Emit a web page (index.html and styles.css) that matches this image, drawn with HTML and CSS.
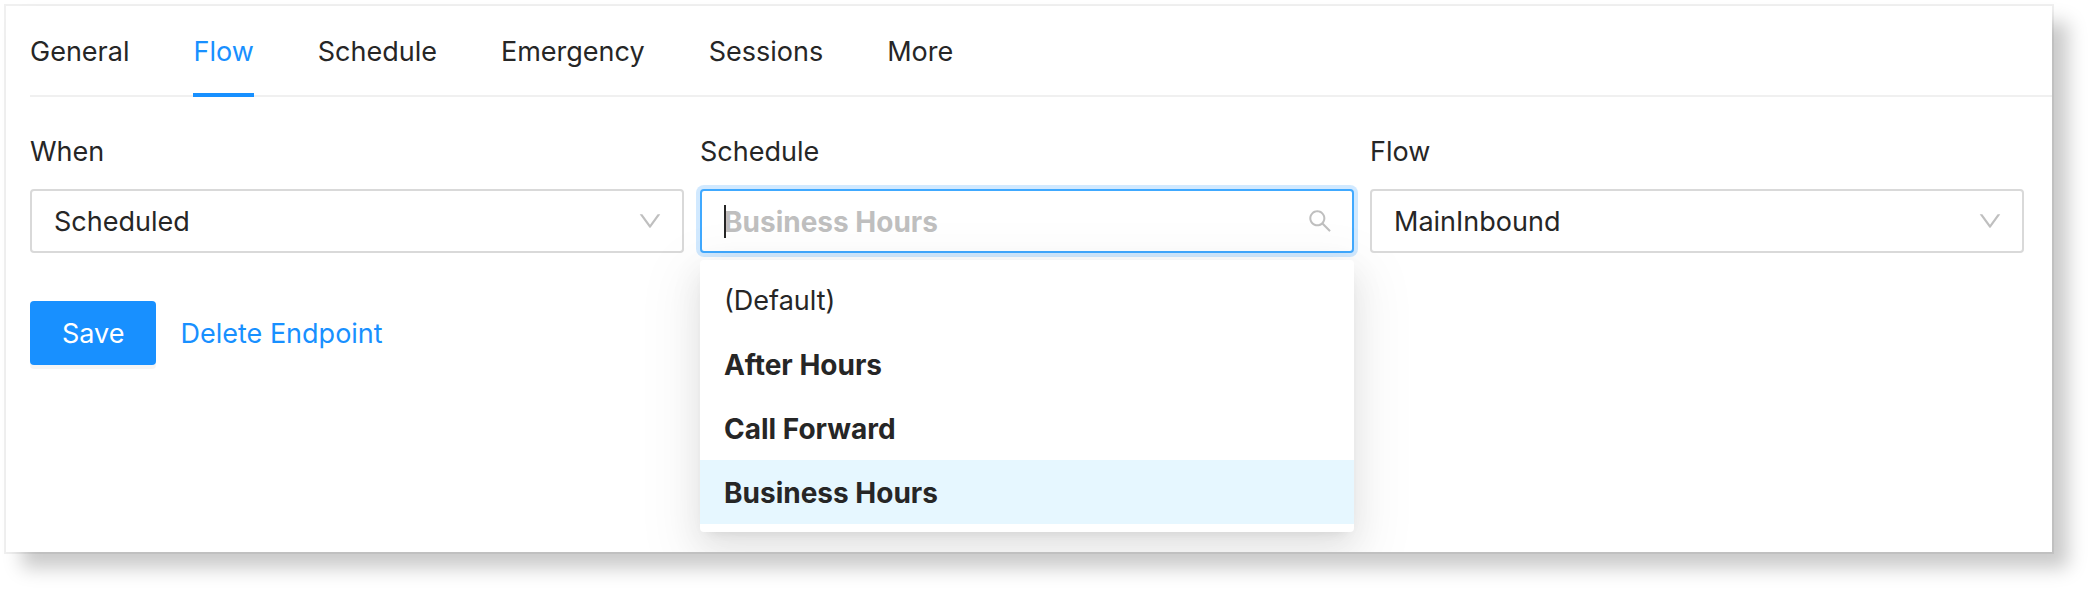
FILE: index.html
```html
<!DOCTYPE html>
<html lang="en">
<head>
  <meta charset="UTF-8" />
  <meta name="viewport" content="width=device-width, initial-scale=1.0" />
  <title>Endpoint - Flow</title>
  <link rel="stylesheet" href="styles.css">
</head>
<body>
  <main class="card">
    <!-- Tabs -->
    <nav class="tabs">
      <a href="#general">General</a>
      <a href="#flow" class="active">Flow</a>
      <a href="#schedule">Schedule</a>
      <a href="#emergency">Emergency</a>
      <a href="#sessions">Sessions</a>
      <a href="#more">More</a>
    </nav>

    <form class="form">
      <div class="fields">
        <div class="field">
          <label for="when">When</label>
          <div class="control">
            <select id="when">
              <option>Scheduled</option>
            </select>
            <svg class="icon" viewBox="64 64 896 896"><path d="M884 256h-75c-5.1 0-9.9 2.5-12.9 6.6L512 654.2 227.9 262.6c-3-4.1-7.8-6.6-12.9-6.6h-75c-6.5 0-10.3 7.4-6.5 12.7l352.6 486.1c12.8 17.6 39 17.6 51.7 0l352.6-486.1c3.9-5.3.1-12.7-6.4-12.7z"/></svg>
          </div>
        </div>

        <!-- Searchable select, open -->
        <div class="field">
          <label for="schedule">Schedule</label>
          <div class="control open">
            <input type="text" id="schedule" placeholder="Business Hours" autocomplete="off" role="combobox" aria-expanded="true" aria-controls="schedule-list">
            <span class="caret"></span>
            <svg class="icon" viewBox="64 64 896 896"><path d="M909.6 854.5L649.9 594.8C690.2 542.7 712 479 712 412c0-80.2-31.3-155.4-87.9-212.1-56.6-56.7-132-87.9-212.1-87.9s-155.5 31.3-212.1 87.9C143.2 256.5 112 331.8 112 412c0 80.1 31.3 155.5 87.9 212.1C256.5 680.8 331.8 712 412 712c67 0 130.6-21.8 182.7-62l259.7 259.6a8.2 8.2 0 0011.6 0l43.6-43.5a8.2 8.2 0 000-11.6zM570.4 570.4C528 612.7 471.8 636 412 636s-116-23.3-158.4-65.6C211.3 528 188 471.8 188 412s23.3-116.1 65.6-158.4C296 211.3 352.2 188 412 188s116.1 23.2 158.4 65.6S636 352.2 636 412s-23.3 116.1-65.6 158.4z"/></svg>
            <ul class="menu" id="schedule-list" role="listbox">
              <li role="option">(Default)</li>
              <li role="option" class="named">After Hours</li>
              <li role="option" class="named">Call Forward</li>
              <li role="option" class="named selected" aria-selected="true">Business Hours</li>
            </ul>
          </div>
        </div>

        <div class="field">
          <label for="flow">Flow</label>
          <div class="control">
            <select id="flow">
              <option>MainInbound</option>
            </select>
            <svg class="icon" viewBox="64 64 896 896"><path d="M884 256h-75c-5.1 0-9.9 2.5-12.9 6.6L512 654.2 227.9 262.6c-3-4.1-7.8-6.6-12.9-6.6h-75c-6.5 0-10.3 7.4-6.5 12.7l352.6 486.1c12.8 17.6 39 17.6 51.7 0l352.6-486.1c3.9-5.3.1-12.7-6.4-12.7z"/></svg>
          </div>
        </div>
      </div>

      <div class="actions">
        <button type="button" class="save">Save</button>
        <a href="#delete">Delete Endpoint</a>
      </div>
    </form>
  </main>
</body>
</html>
```
FILE: styles.css
```css
* {
  margin: 0;
  padding: 0;
  box-sizing: border-box;
}

body {
  display: flex;
  min-height: 100vh;
  padding: 6px 38px 38px 6px;
  background: #fff;
  color: #262626;
  font-family: Inter, Roboto, sans-serif;
  font-size: 27px;
  line-height: 44px;
}

a {
  color: #1890ff;
  text-decoration: none;
}

/* the outline is a translucent ring so the shadow shows through it */
.card {
  flex: 1;
  min-width: 0;
  overflow: hidden;
  padding-left: 24px;
  background: #fff;
  box-shadow: 0 0 0 2px rgba(0, 0, 0, 0.06), 16px 16px 18px rgba(0, 0, 0, 0.21);
}

/* Tabs */
.tabs {
  display: flex;
  gap: 64px;
  box-shadow: inset 0 -2px #f0f0f0;
}
.tabs a {
  padding: 24px 0 19px;
  border-bottom: 4px solid transparent;
  color: #262626;
}
.tabs a.active {
  border-bottom-color: #1890ff;
  color: #1890ff;
}

/* Form */
.form {
  padding: 33px 28px 32px 0;
}
.fields {
  display: grid;
  grid-template-columns: repeat(3, 1fr);
  gap: 16px;
}
.field label {
  display: block;
  margin-bottom: 15px;
}
.control {
  position: relative;
}
.control select,
.control input {
  display: block;
  width: 100%;
  height: 64px;
  padding: 2px 56px 0 22px;
  border: 2px solid #d9d9d9;
  border-radius: 4px;
  outline: none;
  background: #fff;
  color: #262626;
  font: inherit;
  appearance: none;
}
.control input {
  font-size: 28px;
  font-weight: 700;
}
.control input::placeholder {
  color: #bfbfbf;
  opacity: 1;
}
.control.open input {
  border-color: #40a9ff;
  box-shadow: 0 0 0 4px rgba(24, 144, 255, 0.2);
}
.icon {
  position: absolute;
  top: 20px;
  right: 22px;
  width: 24px;
  height: 24px;
  fill: #bfbfbf;
  pointer-events: none;
}
.caret {
  position: absolute;
  top: 16px;
  left: 24px;
  width: 2px;
  height: 33px;
  background: #262626;
}

/* Dropdown list */
.menu {
  position: absolute;
  top: 71px;
  left: 0;
  width: 100%;
  padding: 8px 0;
  border-radius: 4px;
  background: #fff;
  box-shadow: 0 6px 12px -8px rgba(0, 0, 0, 0.12), 0 12px 32px rgba(0, 0, 0, 0.08), 0 18px 56px 16px rgba(0, 0, 0, 0.05);
  list-style: none;
}
.menu li {
  padding: 11px 24px 9px;
}
.menu .named {
  font-size: 28px;
  font-weight: 700;
}
.menu .selected {
  background: #e6f7ff;
}

/* Buttons */
.actions {
  display: flex;
  align-items: center;
  gap: 24px;
  margin-top: 48px;
}
.actions a {
  padding-top: 2px;
}
.save {
  height: 64px;
  padding: 2px 32px 0;
  border: 0;
  border-radius: 4px;
  background: #1890ff;
  box-shadow: 0 4px 0 rgba(0, 0, 0, 0.04);
  color: #fff;
  font: inherit;
}
```
